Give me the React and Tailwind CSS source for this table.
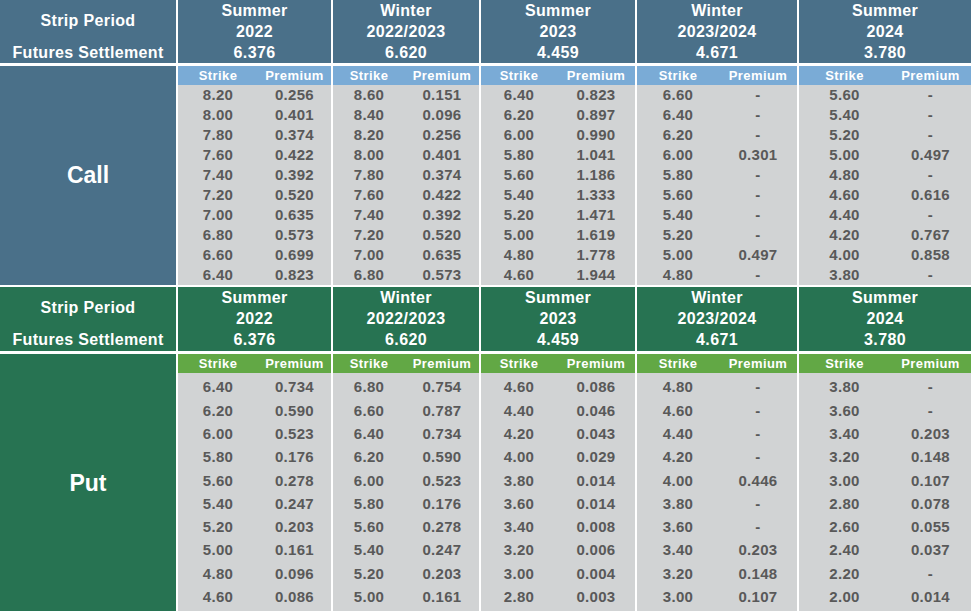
import React from "react";

const blocks = [
  { w: "w-[153px]", s: "w-[80px]", p: "w-[73px]" },
  { w: "w-[146px]", s: "w-[72px]", p: "w-[74px]" },
  { w: "w-[154px]", s: "w-[76px]", p: "w-[78px]" },
  { w: "w-[160px]", s: "w-[82px]", p: "w-[78px]" },
  { w: "w-[172px]", s: "w-[91px]", p: "w-[81px]" },
];

const periods = [
  ["Summer", "2022", "6.376"],
  ["Winter", "2022/2023", "6.620"],
  ["Summer", "2023", "4.459"],
  ["Winter", "2023/2024", "4.671"],
  ["Summer", "2024", "3.780"],
];

const strikes = (start) =>
  Array.from({ length: 10 }, (_, i) => (start - i * 0.2).toFixed(2));

const callData = [
  [strikes(8.2), ["0.256", "0.401", "0.374", "0.422", "0.392", "0.520", "0.635", "0.573", "0.699", "0.823"]],
  [strikes(8.6), ["0.151", "0.096", "0.256", "0.401", "0.374", "0.422", "0.392", "0.520", "0.635", "0.573"]],
  [strikes(6.4), ["0.823", "0.897", "0.990", "1.041", "1.186", "1.333", "1.471", "1.619", "1.778", "1.944"]],
  [strikes(6.6), ["-", "-", "-", "0.301", "-", "-", "-", "-", "0.497", "-"]],
  [strikes(5.6), ["-", "-", "-", "0.497", "-", "0.616", "-", "0.767", "0.858", "-"]],
];

const putData = [
  [strikes(6.4), ["0.734", "0.590", "0.523", "0.176", "0.278", "0.247", "0.203", "0.161", "0.096", "0.086"]],
  [strikes(6.8), ["0.754", "0.787", "0.734", "0.590", "0.523", "0.176", "0.278", "0.247", "0.203", "0.161"]],
  [strikes(4.6), ["0.086", "0.046", "0.043", "0.029", "0.014", "0.014", "0.008", "0.006", "0.004", "0.003"]],
  [strikes(4.8), ["-", "-", "-", "-", "0.446", "-", "-", "0.203", "0.148", "0.107"]],
  [strikes(3.8), ["-", "-", "0.203", "0.148", "0.107", "0.078", "0.055", "0.037", "-", "0.014"]],
];

function Section({ label, dark, light, data, rowH, subH, headH, dataPad }) {
  return (
    <div className="flex gap-[2px]">
      <div className="flex w-[176px] flex-col gap-[3px]">
        <div className={`flex ${headH} flex-col ${dark} text-[16px] font-bold tracking-[0.35px] text-white`}>
          <div className="flex h-[42px] items-center justify-center">Strip Period</div>
          <div className="flex h-[21px] items-center justify-center">Futures Settlement</div>
        </div>
        <div className={`flex flex-1 items-center justify-center ${dark} text-[23px] font-bold text-white`}>
          {label}
        </div>
      </div>
      {blocks.map((b, bi) => (
        <div key={bi} className={`flex ${b.w} flex-col gap-[3px]`}>
          <div className={`flex ${headH} flex-col ${dark} text-[16px] font-bold leading-[21px] tracking-[0.35px] text-white`}>
            {periods[bi].map((t, i) => (
              <div key={i} className="flex h-[21px] items-center justify-center">
                {t}
              </div>
            ))}
          </div>
          <div className="flex flex-col">
            <div className={`flex ${subH} ${light} text-[13px] font-bold tracking-[0.4px] text-white`}>
              <div className={`flex ${b.s} items-center justify-center`}>Strike</div>
              <div className={`flex ${b.p} items-center justify-center`}>Premium</div>
            </div>
            <div className={`flex flex-col bg-[#d1d3d4] ${dataPad} text-[15px] font-bold tracking-[0.3px] text-[#595959]`}>
              {data[bi][0].map((s, ri) => (
                <div key={ri} className={`flex ${rowH}`}>
                  <div className={`flex ${b.s} items-center justify-center`}>{s}</div>
                  <div className={`flex ${b.p} items-center justify-center`}>{data[bi][1][ri]}</div>
                </div>
              ))}
            </div>
          </div>
        </div>
      ))}
    </div>
  );
}

export default function App() {
  return (
    <div
      className="flex h-[611px] w-[975px] flex-col gap-[2px] overflow-hidden bg-white"
      style={{ fontFamily: '"Liberation Sans", Arial, sans-serif' }}
    >
      <Section
        label="Call"
        dark="bg-[#4a7089]"
        light="bg-[#7aabd6]"
        data={callData}
        rowH="h-[20px]"
        subH="h-[19px]"
        headH="h-[63px]"
        dataPad="pt-0"
      />
      <Section
        label="Put"
        dark="bg-[#277352]"
        light="bg-[#62a845]"
        data={putData}
        rowH="h-[23.3px]"
        subH="h-[19px]"
        headH="h-[64px]"
        dataPad="pt-[3px] pb-[4px]"
      />
    </div>
  );
}
